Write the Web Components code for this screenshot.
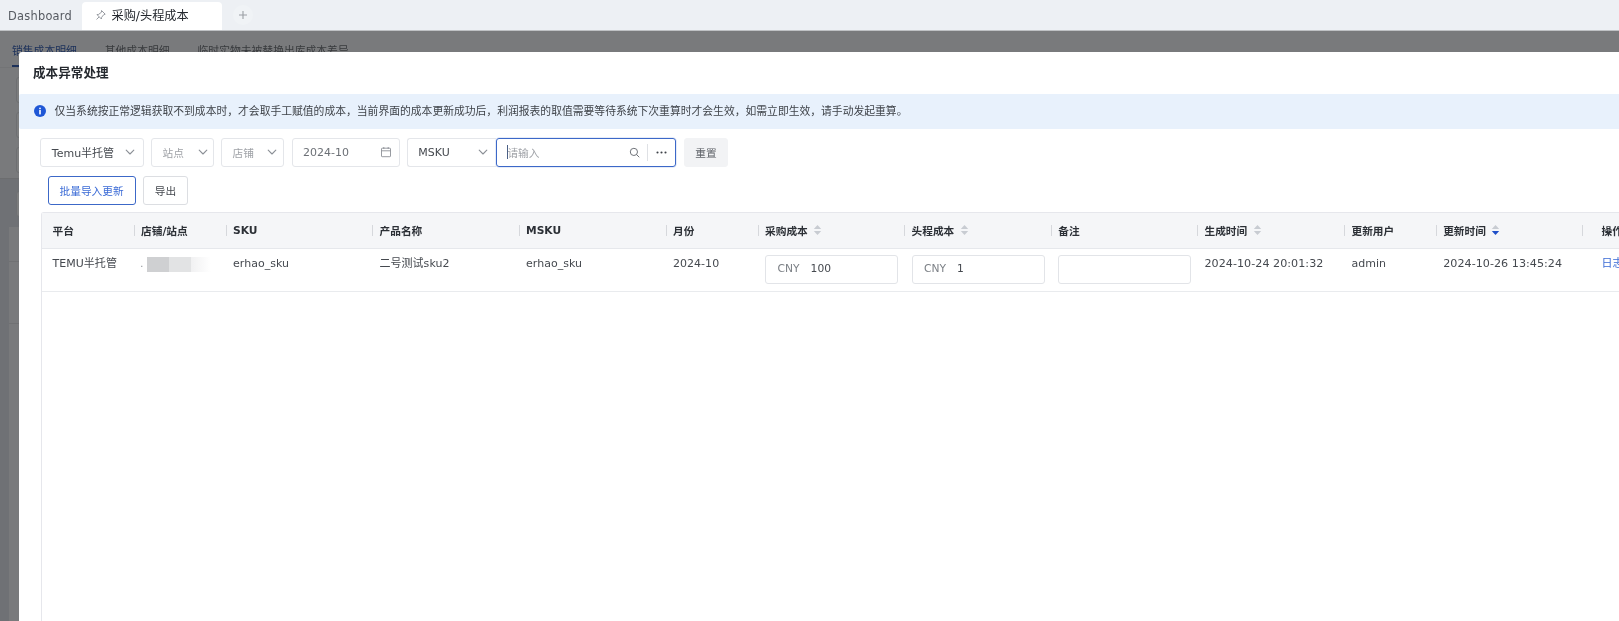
<!DOCTYPE html>
<html lang="zh"><head><meta charset="utf-8"><title>采购/头程成本</title>
<style>
html,body{margin:0;padding:0;height:100%;overflow:hidden;background:#fff}
body{font-family:"DejaVu Sans","Noto Sans CJK SC",sans-serif;font-size:11px;color:#4e5258}
</style></head><body>
<app-shell>
  <tab-bar></tab-bar>
  <back-page></back-page>
  <modal-layer>
    <cost-modal heading="成本异常处理">
      <alert-bar>仅当系统按正常逻辑获取不到成本时&#xFF0C;才会取手工赋值的成本&#xFF0C;当前界面的成本更新成功后&#xFF0C;利润报表的取值需要等待系统下次重算时才会生效&#xFF0C;如需立即生效&#xFF0C;请手动发起重算。</alert-bar>
      <filter-row>
        <filter-select w="103.3" text="Temu半托管"></filter-select>
        <filter-select w="62.5" pr="5" text="站点" muted></filter-select>
        <filter-select w="63.4" pr="6" text="店铺" muted></filter-select>
        <date-field value="2024-10"></date-field>
        <search-group></search-group>
        <ui-button kind="soft" w="44.5">重置</ui-button>
      </filter-row>
      <action-row>
        <ui-button kind="primary" w="88.2">批量导入更新</ui-button>
        <ui-button w="44.7">导出</ui-button>
      </action-row>
      <cost-table></cost-table>
    </cost-modal>
  </modal-layer>
</app-shell>
<script>
const FONT='"DejaVu Sans","Noto Sans CJK SC",sans-serif';
class Base extends HTMLElement{
  render(html){ if(!this.shadowRoot) this.attachShadow({mode:'open'}); this.shadowRoot.innerHTML=html; }
}
const chevron='<svg width="10" height="10" viewBox="0 0 10 10" fill="none" stroke="#8b8f96" stroke-width="1.1" stroke-linecap="round" stroke-linejoin="round"><path d="M1.2 3.2 5 7 8.8 3.2"/></svg>';

customElements.define('app-shell',class extends Base{connectedCallback(){this.render(`<style>
:host{display:flex;flex-direction:column;height:621px;width:1619px;overflow:hidden;position:relative;filter:blur(.32px);font-family:${FONT}}
</style><slot></slot>`)}});

customElements.define('tab-bar',class extends Base{connectedCallback(){this.render(`<style>
:host{display:flex;align-items:flex-end;height:30px;background:#edf0f4;flex:none;font-size:11.4px;color:#565a61}
.dash{padding:0 0 0 8px;height:28px;display:flex;align-items:center;letter-spacing:.25px;width:74px}
.tab{width:140px;height:28px;background:#fff;border-radius:4px 4px 0 0;display:flex;align-items:center;padding:0 0 1.5px 12.5px;box-sizing:border-box;color:#24282e;font-size:12.2px;gap:5px}
.plus{margin-left:11px;width:20px;height:20px;border-radius:50%;background:#f0f3f6;display:flex;align-items:center;justify-content:center;margin-bottom:5px}
</style>
<span class="dash">Dashboard</span>
<span class="tab"><svg width="12" height="12" viewBox="0 0 12 12" fill="none" stroke="#8d9197" stroke-width=".9" stroke-linejoin="round" stroke-linecap="round"><path d="M6.8 1.8 10.2 5.2 8.6 5.8 6.6 8.4 6.4 10 2 5.6 3.6 5.4 6.2 3.4Z"/><path d="M3.8 8.2 1.8 10.2"/></svg><span>采购/头程成本</span></span>
<span class="plus"><svg width="10" height="10" viewBox="0 0 10 10" stroke="#9a9ea4" stroke-width="1.1" fill="none"><path d="M5 1v8M1 5h8"/></svg></span>`)}});

customElements.define('back-page',class extends Base{connectedCallback(){this.render(`<style>
:host{display:flex;flex-direction:column;flex:1;min-height:0;border-top:1px solid #bfc1c4;background:#f2f5f9}
.tabs{display:flex;height:37px;box-sizing:border-box;padding-left:12px;gap:28px;font-size:10.8px;color:#70747a;border-bottom:1px solid #e6e8ec;flex:none}
.tabs span{padding-top:11px;position:relative}
.tabs .on{color:#3a62b4}
.tabs .on::after{content:"";position:absolute;left:0;right:0;bottom:0;height:2px;background:#3a62b4}
.top{height:111px;padding-left:15.5px;display:flex;flex-direction:column;gap:9px;box-sizing:border-box;padding-top:9px;border-bottom:1px solid #d8dade;flex:none}
.ghost{width:30px;height:26px;border:1px solid #dcdfe4;border-radius:3px;background:#f8fafc;box-sizing:border-box}
.rest{flex:1;background:#dfe3ea;padding-left:9px;display:flex;flex-direction:column}
.box{margin-left:6.5px;width:30px;height:26px;margin-top:12px;border:1px solid #dcdfe4;border-radius:3px;background:#f8fafc;box-sizing:border-box;flex:none}
.panel{margin-top:10px;flex:1;background:#f2f5f9;display:flex;flex-direction:column}
.panel i{display:block;height:34px;border-bottom:1px solid #e1e3e6;flex:none}
.panel i+i{height:61px}
</style>
<div class="tabs"><span class="on">销售成本明细</span><span>其他成本明细</span><span>临时实物未被替换出库成本差异</span></div>
<div class="top"><div class="ghost"></div><div class="ghost"></div><div class="ghost"></div></div>
<div class="rest"><div class="box"></div><div class="panel"><i></i><i></i></div></div>`)}});

customElements.define('modal-layer',class extends Base{connectedCallback(){this.render(`<style>
:host{position:absolute;left:0;right:0;top:31px;bottom:0;background:rgba(0,0,0,.5);overflow:hidden;display:block}
</style><slot></slot>`)}});

customElements.define('cost-modal',class extends Base{connectedCallback(){this.render(`<style>
:host{position:absolute;left:19px;top:20.7px;width:1700px;height:700px;background:#fff;display:flex;flex-direction:column;border-radius:3px 0 0 0}
h2{margin:0;height:42.6px;display:flex;align-items:center;padding:0 0 2px 14px;font-size:12.6px;font-weight:700;color:#24282e;box-sizing:border-box;flex:none}
</style><h2>${this.getAttribute('heading')}</h2><slot></slot>`)}});

customElements.define('alert-bar',class extends Base{connectedCallback(){this.render(`<style>
:host{display:flex;align-items:center;height:34.3px;background:#e8f1fc;padding-left:15px;gap:8px;font-size:10.8px;color:#3f4349;flex:none;border-radius:2px}
svg{flex:none}
span{margin-top:-2px;margin-left:.5px}
</style><svg width="12" height="12" viewBox="0 0 12 12"><circle cx="6" cy="6" r="6" fill="#1f57d6"/><rect x="5.2" y="5" width="1.6" height="4.4" fill="#fff"/><rect x="5.2" y="2.7" width="1.6" height="1.5" fill="#fff"/></svg><span><slot></slot></span>`)}});

customElements.define('filter-row',class extends Base{connectedCallback(){this.render(`<style>
:host{display:flex;margin:9.7px 0 0 21.3px;height:29px;gap:7.5px;flex:none}
</style><slot></slot>`)}});

customElements.define('action-row',class extends Base{connectedCallback(){this.render(`<style>
:host{display:flex;margin:8.7px 0 0 28.5px;height:28.7px;gap:7.5px;flex:none}
</style><slot></slot>`)}});

customElements.define('filter-select',class extends Base{connectedCallback(){
const m=this.hasAttribute('muted');this.render(`<style>
:host{display:flex;box-sizing:border-box;width:${this.getAttribute('w')}px;height:100%;align-items:center;justify-content:space-between;border:1px solid #e4e6ea;border-radius:3px;padding:0 ${this.getAttribute('pr')||8}px 1px 10.5px;font-size:${m?'10.7':'11'}px;color:${m?'#9fa2a7':'#45494f'};background:#fff}
svg{display:block}
</style><span>${this.getAttribute('text')}</span>${chevron}`)}});

customElements.define('date-field',class extends Base{connectedCallback(){this.render(`<style>
:host{display:flex;box-sizing:border-box;width:107.8px;height:100%;align-items:center;justify-content:space-between;border:1px solid #e4e6ea;border-radius:3px;padding:0 6.5px 1px 10px;font-size:11px;color:#6c7076;background:#fff}
</style><span>${this.getAttribute('value')}</span><svg width="12" height="12" viewBox="0 0 12 12" fill="none" stroke="#8d9197" stroke-width=".9"><rect x="1.5" y="2.2" width="9" height="8.5" rx=".6"/><path d="M1.5 4.8h9M3.8 1v2M8.2 1v2"/></svg>`)}});

customElements.define('search-group',class extends Base{connectedCallback(){this.render(`<style>
:host{display:flex;height:100%;flex:none}
.mode{box-sizing:border-box;width:88.6px;height:100%;display:flex;align-items:center;justify-content:space-between;border:1px solid #e4e6ea;border-right:0;border-radius:3px 0 0 3px;padding:0 7.5px 1px 10px;font-size:11px;color:#45494f}
.box{box-sizing:border-box;width:180.4px;height:100%;border:1px solid #3c68c8;border-radius:3px;display:flex;align-items:center;padding:0 0 1px 10px;font-size:10.7px;color:#a0a3a8;box-shadow:0 0 0 .5px rgba(60,104,200,.25)}
.cur{width:1px;height:14px;background:#4a5f85;margin-right:-.5px;flex:none}
.t{flex:1}
.sep{width:1px;height:17px;background:#dfe1e5;margin:0 8px 0 7px}
.dots{margin-right:8.5px;display:flex}
</style>
<div class="mode"><span>MSKU</span>${chevron}</div>
<div class="box"><i class="cur"></i><span class="t">请输入</span>
<svg width="11" height="11" viewBox="0 0 11 11" fill="none" stroke="#6f7379" stroke-width="1"><circle cx="4.9" cy="4.9" r="3.6"/><path d="M7.6 7.6 10 10" stroke-linecap="round"/></svg>
<i class="sep"></i><svg class="dots" width="11" height="11" viewBox="0 0 11 11" fill="#3d4147"><circle cx="1.5" cy="5.5" r="1.05"/><circle cx="5.5" cy="5.5" r="1.05"/><circle cx="9.5" cy="5.5" r="1.05"/></svg></div>`)}});

customElements.define('ui-button',class extends Base{connectedCallback(){
const k=this.getAttribute('kind');
const s=k==='primary'?'border:1px solid #3c68c8;color:#3b6bd6;background:#fff':k==='soft'?'border:1px solid #f2f3f5;background:#f2f3f5;color:#5f6369':'border:1px solid #dcdee2;color:#45494f;background:#fff';
this.render(`<style>
:host{display:flex;box-sizing:border-box;width:${this.getAttribute('w')}px;height:100%;align-items:center;justify-content:center;border-radius:3px;font-size:10.7px;${s}}
</style><slot></slot>`)}});

customElements.define('sort-icon',class extends Base{connectedCallback(){
const a=this.hasAttribute('active');this.render(`<style>
:host{display:inline-flex;margin-left:5.5px;vertical-align:middle}
</style><svg width="9" height="12" viewBox="0 0 9 12"><path d="M4.5 1 8.2 5H.8Z" fill="#c8ccd2"/><path d="M4.5 11 8.2 7H.8Z" fill="${a?'#1f4fc8':'#c8ccd2'}"/></svg>`)}});

customElements.define('money-input',class extends Base{connectedCallback(){
const c=this.getAttribute('cur'),v=this.getAttribute('value');this.render(`<style>
:host{display:flex;box-sizing:border-box;width:133px;height:29.5px;border:1px solid #e2e4e8;border-radius:3px;align-items:center;padding-left:11.5px;font-size:10.7px;color:#45494f;background:#fff;gap:11px}
.c{color:#7c8086}
</style>${c?`<span class="c">${c}</span><span>${v}</span>`:''}`)}});

const COLS=[['平台',92,''],['店铺/站点',92,''],['SKU',146.5,''],['产品名称',146.5,''],['MSKU',147,''],['月份',92,''],['采购成本',146.5,'s'],['头程成本',146.7,'s'],['备注',146.3,''],['生成时间',147,'s'],['更新用户',91.7,''],['更新时间',146.3,'a'],['操作',120,'']];
customElements.define('cost-table',class extends Base{connectedCallback(){
const head=COLS.map(([t,w,s],i)=>`<div class="th${i?' sep':''}${i==12?' op':''}">${t}${s?`<sort-icon${s==='a'?' active':''}></sort-icon>`:''}</div>`).join('');
const site='<span class="site"><span class="dot">.</span><i style="background:#cfd0d2;width:21.5px"></i><i style="background:#e2e3e4;width:22px"></i><i style="background:linear-gradient(90deg,#f1f1f2,#fff);width:20px"></i></span>';
const cells=['TEMU半托管',site,'erhao_sku','二号测试sku2','erhao_sku','2024-10','<money-input cur="CNY" value="100"></money-input>','<money-input cur="CNY" value="1"></money-input>','<money-input></money-input>','2024-10-24 20:01:32','admin','2024-10-26 13:45:24','<a>日志</a>'];
const row=cells.map((c,i)=>`<div class="td${i==0?' first':''}${i==12?' op':''}">${c}</div>`).join('');
this.render(`<style>
:host{display:block;margin:7.7px 0 0 21.5px;width:1640px;flex:1;border:1.5px solid #e6e7ec;border-right:0;border-bottom:0;box-sizing:border-box;border-radius:3px 0 0 0}
.grid{display:grid;grid-template-columns:${COLS.map(c=>c[1]+'px').join(' ')};grid-template-rows:35.2px 43.4px}
.th{background:#f5f6f8;display:flex;align-items:center;padding-left:7.5px;font-size:10.7px;font-weight:700;color:#2c3036;border-bottom:1px solid #e6e8ec;position:relative;white-space:nowrap}
.th:first-child{padding-left:11px}
.th.sep::before{content:"";position:absolute;left:0;top:12px;height:11px;width:1px;background:#d6d8dc}
.th.op{padding-left:19.5px}
.td{padding:8px 0 0 7.5px;font-size:11px;color:#45494f;border-bottom:1px solid #e9ebee;white-space:nowrap;line-height:14px;box-sizing:border-box;height:43.4px;letter-spacing:.03px}
.td.first{padding-left:11px}
.td.op{padding-left:19.5px}
.td:nth-child(23),.td:nth-child(25){font-size:11.15px}
a{color:#3b6bd6}
.site{display:inline-flex;align-items:flex-start;height:15px;margin-top:0}
.site i{display:block;height:15px}
.dot{width:7px;color:#9a9da2;line-height:13px;margin-left:-1px}
money-input{margin-top:-2px}
</style><div class="grid">${head}${row}</div>`)}});
</script>
</body></html>
